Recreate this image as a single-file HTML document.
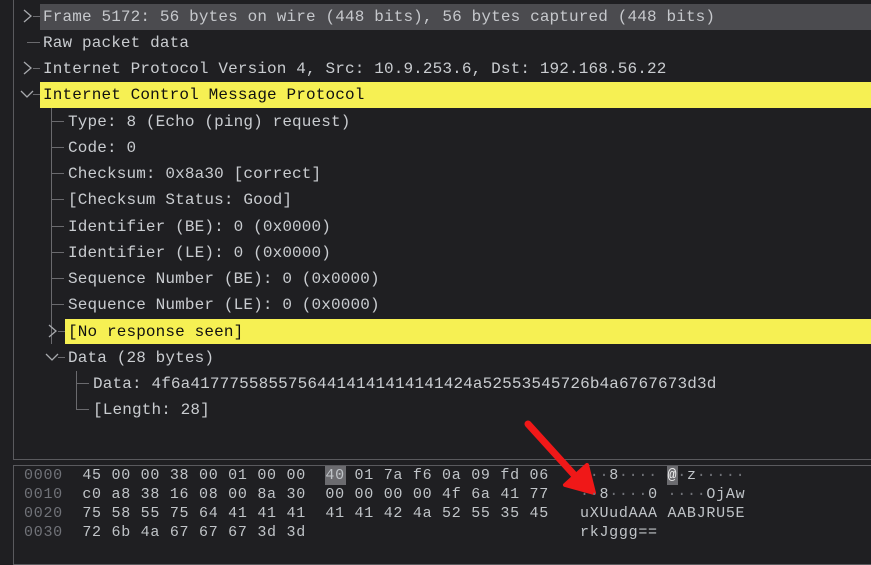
<!DOCTYPE html>
<html><head><meta charset="utf-8"><style>
*{margin:0;padding:0;box-sizing:border-box}
body{width:871px;height:563px;background:#1f1f22;overflow:hidden;position:relative;font-family:"Liberation Mono","DejaVu Sans Mono",monospace;color:#c9ccd0}
.pane{position:absolute;border:1px solid #5a5a5e;border-right:none}
.r{position:absolute;height:26px;line-height:26px;font-size:16px;letter-spacing:0.14px;white-space:pre;margin-top:1px}
.hl{position:absolute;background:#f6f053}
.gr{position:absolute;background:#4b4b4f}
.ln{position:absolute;background:#6a6a6e}
.h{position:absolute;font-size:15px;letter-spacing:0.72px;white-space:pre;line-height:19px;color:#c0c4c8;margin-top:1px}
.off{color:#707278}
</style></head><body>
<div class="pane" style="left:13px;top:-2px;width:860px;height:462px"></div>
<div class="pane" style="left:13px;top:465px;width:860px;height:100px"></div>

<div class="gr" style="left:40px;top:4px;width:831px;height:26px"></div>
<div class="hl" style="left:40px;top:82px;width:831px;height:26px"></div>
<div class="hl" style="left:65px;top:319px;width:806px;height:25px"></div>

<div class="ln" style="left:27px;top:42px;width:13px;height:1px"></div>
<div class="ln" style="left:51px;top:108px;width:1px;height:236px"></div>
<div class="ln" style="left:51px;top:121px;width:13px;height:1px"></div>
<div class="ln" style="left:51px;top:147px;width:13px;height:1px"></div>
<div class="ln" style="left:51px;top:173px;width:13px;height:1px"></div>
<div class="ln" style="left:51px;top:199px;width:13px;height:1px"></div>
<div class="ln" style="left:51px;top:226px;width:13px;height:1px"></div>
<div class="ln" style="left:51px;top:252px;width:13px;height:1px"></div>
<div class="ln" style="left:51px;top:278px;width:13px;height:1px"></div>
<div class="ln" style="left:51px;top:304px;width:13px;height:1px"></div>
<div class="ln" style="left:58px;top:331px;width:7px;height:1px"></div>
<div class="ln" style="left:58px;top:357px;width:7px;height:1px"></div>
<div class="ln" style="left:76px;top:371px;width:1px;height:39px"></div>
<div class="ln" style="left:76px;top:383px;width:13px;height:1px"></div>
<div class="ln" style="left:76px;top:409px;width:13px;height:1px"></div>
<div class="ln" style="left:33px;top:16px;width:7px;height:1px"></div>
<div class="ln" style="left:33px;top:68px;width:7px;height:1px"></div>
<div class="ln" style="left:33px;top:94px;width:7px;height:1px"></div>

<svg style="position:absolute;left:0;top:0" width="871" height="563">
<g fill="none" stroke="#a8aaae" stroke-width="1.3">
<path d="M24 10 L31 16 L24 22"/><path d="M24 62 L31 68 L24 74"/>
<path d="M21 91 L27 97 L33 91"/>
<path d="M49 325 L56 331 L49 337"/><path d="M46 354 L52 360 L58 354"/>
</g>
<path d="M528 424 L577 478" stroke="#f01818" stroke-width="7" stroke-linecap="round"/>
<path d="M565 485 L594 493 L587 465 Z" fill="#f01818" stroke="#f01818" stroke-width="4" stroke-linejoin="round"/>
</svg>

<div class="r" style="left:43px;top:3px;color:#c6c8cc">Frame 5172: 56 bytes on wire (448 bits), 56 bytes captured (448 bits)</div>
<div class="r" style="left:43px;top:29px">Raw packet data</div>
<div class="r" style="left:43px;top:55px">Internet Protocol Version 4, Src: 10.9.253.6, Dst: 192.168.56.22</div>
<div class="r" style="left:43px;top:81px;color:#111">Internet Control Message Protocol</div>
<div class="r" style="left:68px;top:108px">Type: 8 (Echo (ping) request)</div>
<div class="r" style="left:68px;top:134px">Code: 0</div>
<div class="r" style="left:68px;top:160px">Checksum: 0x8a30 [correct]</div>
<div class="r" style="left:68px;top:186px">[Checksum Status: Good]</div>
<div class="r" style="left:68px;top:213px">Identifier (BE): 0 (0x0000)</div>
<div class="r" style="left:68px;top:239px">Identifier (LE): 0 (0x0000)</div>
<div class="r" style="left:68px;top:265px">Sequence Number (BE): 0 (0x0000)</div>
<div class="r" style="left:68px;top:291px">Sequence Number (LE): 0 (0x0000)</div>
<div class="r" style="left:68px;top:318px;color:#111">[No response seen]</div>
<div class="r" style="left:68px;top:344px">Data (28 bytes)</div>
<div class="r" style="left:93px;top:370px">Data: 4f6a41777558557564414141414141424a52553545726b4a6767673d3d</div>
<div class="r" style="left:93px;top:396px">[Length: 28]</div>

<div class="gr" style="left:325px;top:466px;width:21px;height:19px;background:#6b6b6f"></div>
<div class="gr" style="left:667px;top:466px;width:11px;height:19px;background:#6b6b6f"></div>
<div class="h" style="left:24px;top:465px"><span class="off">0000</span>  45 00 00 38 00 01 00 00  40 01 7a f6 0a 09 fd 06</div>
<div class="h" style="left:24px;top:484px"><span class="off">0010</span>  c0 a8 38 16 08 00 8a 30  00 00 00 00 4f 6a 41 77</div>
<div class="h" style="left:24px;top:503px"><span class="off">0020</span>  75 58 55 75 64 41 41 41  41 41 42 4a 52 55 35 45</div>
<div class="h" style="left:24px;top:522px"><span class="off">0030</span>  72 6b 4a 67 67 67 3d 3d</div>
<div class="h" style="left:580px;top:465px"> <span class="off">··</span>8<span class="off">····</span> <span style="color:#eee">@</span><span class="off">·</span>z<span class="off">·····</span></div>
<div class="h" style="left:580px;top:484px"><span class="off">··</span>8<span class="off">····</span>0 <span class="off">····</span>OjAw</div>
<div class="h" style="left:580px;top:503px">uXUudAAA AABJRU5E</div>
<div class="h" style="left:580px;top:522px">rkJggg==</div>
</body></html>
